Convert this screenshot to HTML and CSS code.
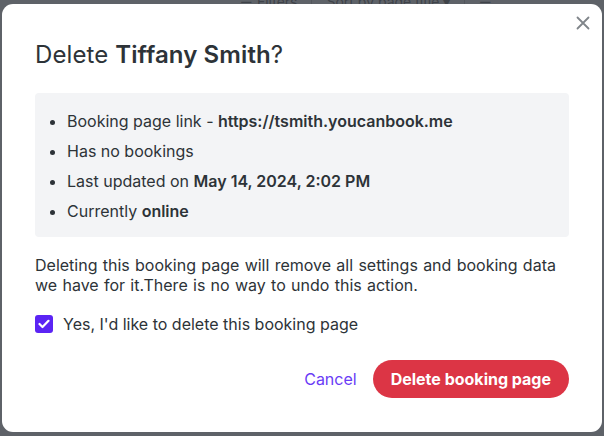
FILE: index.html
```html
<!DOCTYPE html>
<html>
<head>
<meta charset="utf-8">
<link rel="stylesheet" href="styles.css">
</head>
<body>
<div class="toolbar">
  <span class="tb-item">☰ Filters</span>
  <span class="tb-sep"></span>
  <span class="tb-item">Sort by page title ▾</span>
  <span class="tb-sep"></span>
  <span class="tb-item">☰</span>
</div>
<div class="modal">
  <button class="close" aria-label="Close">
    <svg width="14" height="14" viewBox="0 0 14 14"><path d="M1.5 1.5 L12.5 12.5 M12.5 1.5 L1.5 12.5" stroke="#80858a" stroke-width="1.8" fill="none" stroke-linecap="round"/></svg>
  </button>
  <h1 class="title">Delete <b>Tiffany Smith</b>?</h1>
  <div class="info">
    <ul>
      <li>Booking page link - <b>https://tsmith.youcanbook.me</b></li>
      <li>Has no bookings</li>
      <li>Last updated on <b>May 14, 2024, 2:02 PM</b></li>
      <li>Currently <b>online</b></li>
    </ul>
  </div>
  <p class="warn">Deleting this booking page will remove all settings and booking data we have for it.There is no way to undo this action.</p>
  <label class="check">
    <span class="box"><svg width="12" height="10" viewBox="0 0 12 10"><path d="M1.5 5 L4.5 8 L10.5 1.8" stroke="#fff" stroke-width="2.2" fill="none" stroke-linecap="round" stroke-linejoin="round"/></svg></span>
    <span>Yes, I'd like to delete this booking page</span>
  </label>
  <div class="actions">
    <button class="cancel">Cancel</button>
    <button class="delete">Delete booking page</button>
  </div>
</div>
</body>
</html>
```
FILE: styles.css
```css
html, body {
  margin: 0;
  padding: 0;
}
body {
  width: 604px;
  height: 436px;
  background: #5e6268;
  font-family: Inter, "Noto Sans", sans-serif;
  position: relative;
  overflow: hidden;
}
.toolbar {
  display: flex;
  align-items: center;
  gap: 14px;
  padding-left: 240px;
  height: 10px;
  margin-top: -4px;
  color: #3f4349;
  font-size: 14px;
}
.tb-sep {
  width: 1px;
  height: 14px;
  background: #52565c;
}
.modal {
  position: absolute;
  left: 2px;
  top: 4px;
  width: 600px;
  height: 428px;
  background: #fff;
  border-radius: 11px;
  box-sizing: border-box;
  padding: 33px 33px 0 33px;
  color: #2d3338;
}
.close {
  position: absolute;
  right: 11px;
  top: 11px;
  width: 16px;
  height: 16px;
  padding: 0;
  border: 0;
  background: none;
  display: flex;
  align-items: center;
  justify-content: center;
}
.title {
  margin: 0;
  font-size: 24px;
  font-weight: 400;
  line-height: 36px;
  letter-spacing: 0.1px;
}
.title b {
  font-weight: 600;
}
.info {
  margin-top: 20px;
  background: #f3f4f6;
  border-radius: 4px;
  padding: 13px 0 11px 0;
}
.info ul {
  margin: 0;
  padding: 0 0 0 32px;
  font-size: 16px;
  line-height: 30px;
}
.info b {
  font-weight: 600;
}
.warn {
  margin: 18px 0 0 0;
  font-size: 16px;
  line-height: 20px;
  word-spacing: 0.8px;
}
.check {
  margin-top: 19px;
  display: flex;
  align-items: center;
  gap: 10px;
  font-size: 16px;
  line-height: 20px;
}
.box {
  width: 18px;
  height: 18px;
  background: #5b24f4;
  border-radius: 3px;
  display: flex;
  align-items: center;
  justify-content: center;
}
.actions {
  margin-top: 26px;
  display: flex;
  justify-content: flex-end;
  align-items: center;
  gap: 16px;
}
.cancel {
  border: 0;
  background: none;
  padding: 0;
  font-family: inherit;
  font-size: 16px;
  color: #6a3cf6;
}
.delete {
  border: 0;
  background: #dc3545;
  color: #fff;
  font-family: inherit;
  font-size: 16px;
  font-weight: 700;
  height: 38px;
  padding: 0 18px;
  border-radius: 19px;
}
```
